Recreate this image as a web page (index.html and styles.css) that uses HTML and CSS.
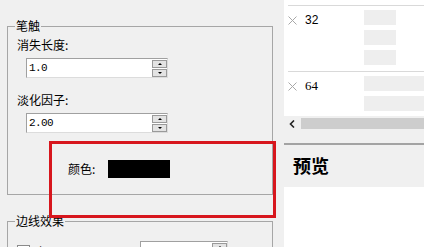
FILE: index.html
```html
<!DOCTYPE html>
<html lang="zh-CN">
<head>
<meta charset="utf-8">
<title>笔触设置</title>
<link rel="stylesheet" href="styles.css">
</head>
<body>
<div class="app">
  <div class="left-pane">
    <fieldset class="group group-stroke">
      <legend>笔触</legend>
      <div class="field-label">消失长度:</div>
      <div class="spin">
        <div class="spin-val">1.0</div>
        <div class="spin-btns">
          <div class="spin-btn"><span class="tri-up"></span></div>
          <div class="spin-btn"><span class="tri-down"></span></div>
        </div>
      </div>
      <div class="field-label second">淡化因子:</div>
      <div class="spin">
        <div class="spin-val">2.00</div>
        <div class="spin-btns">
          <div class="spin-btn"><span class="tri-up"></span></div>
          <div class="spin-btn"><span class="tri-down"></span></div>
        </div>
      </div>
      <div class="color-row">
        <span class="color-label">颜色:</span>
        <span class="swatch"></span>
      </div>
    </fieldset>
    <fieldset class="group group-edge">
      <legend>边线效果</legend>
      <div class="edge-row">
        <span class="check"></span>
        <span class="edge-text">上下</span>
        <div class="spin spin-small">
          <div class="spin-val">10</div>
          <div class="spin-btns">
            <div class="spin-btn"><span class="tri-up"></span></div>
            <div class="spin-btn"><span class="tri-down"></span></div>
          </div>
        </div>
      </div>
    </fieldset>
  </div>
  <div class="right-pane">
    <div class="brush-list">
      <div class="brush-row">
        <div class="brush-name">
          <svg class="x-icon" width="9" height="9" viewBox="0 0 9 9"><path d="M0.5 0.5 L8.5 8.5 M8.5 0.5 L0.5 8.5" stroke="#a8a8a8" stroke-width="1" fill="none"/></svg>
          <span class="brush-size">32</span>
        </div>
        <div class="brush-samples">
          <div class="sample s32"></div>
          <div class="sample s32"></div>
          <div class="sample s32"></div>
        </div>
      </div>
      <div class="brush-row">
        <div class="brush-name">
          <svg class="x-icon" width="9" height="9" viewBox="0 0 9 9"><path d="M0.5 0.5 L8.5 8.5 M8.5 0.5 L0.5 8.5" stroke="#a8a8a8" stroke-width="1" fill="none"/></svg>
          <span class="brush-size serif">64</span>
        </div>
        <div class="brush-samples">
          <div class="sample s64"></div>
          <div class="sample s64"></div>
          <div class="sample s64"></div>
        </div>
      </div>
    </div>
    <div class="hscroll">
      <div class="scroll-arrow">
        <svg width="6" height="8" viewBox="0 0 6 8"><path d="M5 0.5 L1.5 4 L5 7.5" stroke="#222" stroke-width="1.6" fill="none"/></svg>
      </div>
      <div class="scroll-thumb"></div>
    </div>
    <div class="preview">
      <div class="preview-head">预览</div>
      <div class="preview-body"></div>
    </div>
  </div>
  <div class="annot"></div>
</div>
</body>
</html>
```
FILE: styles.css
```css
* { box-sizing: border-box; }
html, body { margin: 0; padding: 0; }
body {
  width: 424px;
  height: 247px;
  overflow: hidden;
  background: #f0f0f0;
  font-family: "Noto Sans CJK SC", "Noto Sans", sans-serif;
  font-size: 12px;
  color: #000;
}
.app {
  position: relative;
  display: flex;
  width: 424px;
  height: 247px;
  overflow: hidden;
}
.left-pane {
  width: 284px;
  padding: 0 11px 0 7px;
  flex: none;
}
.group {
  margin: 0;
  padding: 3px 8px 0 9px;
  border: 1px solid #a6a6a6;
  min-width: 0;
}
.group legend {
  margin-left: -2px;
  padding: 0 1px;
  line-height: 16px;
  height: 16px;
}
.group-stroke {
  margin-top: 18px;
  height: 177px;
}
.group-edge {
  margin-top: 18px;
  height: 60px;
  border-bottom: none;
}
.field-label {
  line-height: 16px;
  height: 16px;
}
.field-label.second {
  margin-top: 14px;
}
.spin {
  display: flex;
  width: 142px;
  height: 20px;
  margin: 5px 0 0 9px;
  background: #fff;
  border: 1px solid #a0a0a0;
  border-right-color: #dcdcdc;
  border-bottom-color: #dcdcdc;
}
.spin-val {
  flex: 1;
  padding-left: 2px;
  font-family: "Liberation Mono", "DejaVu Sans Mono", monospace;
  font-size: 11px;
  letter-spacing: -0.6px;
  line-height: 18px;
}
.spin-btns {
  width: 15px;
  display: flex;
  flex-direction: column;
  gap: 1px;
  padding: 1px 0 0 0;
}
.spin-btn {
  flex: 1;
  background: #e3e3e3;
  border: 1px solid #9a9a9a;
  display: flex;
  align-items: center;
  justify-content: center;
}
.tri-up {
  width: 0; height: 0;
  border-left: 2px solid transparent;
  border-right: 2px solid transparent;
  border-bottom: 2px solid #000;
}
.tri-down {
  width: 0; height: 0;
  border-left: 2px solid transparent;
  border-right: 2px solid transparent;
  border-top: 2px solid #000;
}
.color-row {
  display: flex;
  align-items: center;
  margin: 27px 0 0 51px;
  height: 18px;
}
.color-label {
  width: 40px;
  line-height: 16px;
}
.swatch {
  width: 62px;
  height: 18px;
  background: #000;
}
.edge-row {
  display: flex;
  align-items: flex-start;
  margin-top: 9px;
}
.check {
  width: 13px;
  height: 13px;
  margin-top: 4px;
  border: 1px solid #8a8a8a;
  background: #fff;
}
.edge-text {
  margin-left: 5px;
  line-height: 16px;
  margin-top: 3px;
  width: 100px;
}
.spin-small {
  width: 88px;
  margin: 0 0 0 5px;
}
.right-pane {
  width: 140px;
  flex: none;
  display: flex;
  flex-direction: column;
}
.brush-list {
  height: 116px;
  background: #fff;
  padding-top: 5px;
  overflow: hidden;
}
.brush-row {
  margin-left: 4px;
  border-top: 1px solid #d9d9d9;
  display: flex;
  padding: 4px 0 6px 0;
}
.brush-name {
  width: 76px;
  flex: none;
  display: flex;
  align-items: flex-start;
  padding-top: 2px;
}
.x-icon {
  margin-top: 4px;
  flex: none;
}
.brush-size {
  margin-left: 8px;
  font-family: "Liberation Sans", Arial, sans-serif;
  font-size: 12px;
  line-height: 16px;
}
.brush-size.serif {
  font-family: "Liberation Serif", serif;
  font-size: 13px;
}
.brush-samples {
  flex: none;
  display: flex;
  flex-direction: column;
  gap: 5px;
}
.sample {
  height: 15px;
  background: #eeeeee;
}
.s32 { width: 32px; }
.s64 { width: 64px; }
.hscroll {
  height: 15px;
  flex: none;
  display: flex;
  background: #f0f0f0;
}
.scroll-arrow {
  width: 17px;
  display: flex;
  align-items: center;
  padding-left: 5px;
}
.scroll-thumb {
  flex: 1;
  height: 11px;
  margin-top: 2px;
  background: #cdcdcd;
}
.preview {
  margin-top: 12px;
  border-top: 2px solid #a3a3a3;
  flex: 1;
  display: flex;
  flex-direction: column;
}
.preview-head {
  height: 42px;
  background: #f0f0f0;
  padding-left: 9px;
  font-size: 18px;
  font-weight: bold;
  line-height: 40px;
}
.preview-body {
  flex: 1;
  background: #fff;
}
.annot {
  position: absolute;
  left: 49px;
  top: 141px;
  width: 227px;
  height: 77px;
  border: 3px solid #d7161d;
  pointer-events: none;
}
```
